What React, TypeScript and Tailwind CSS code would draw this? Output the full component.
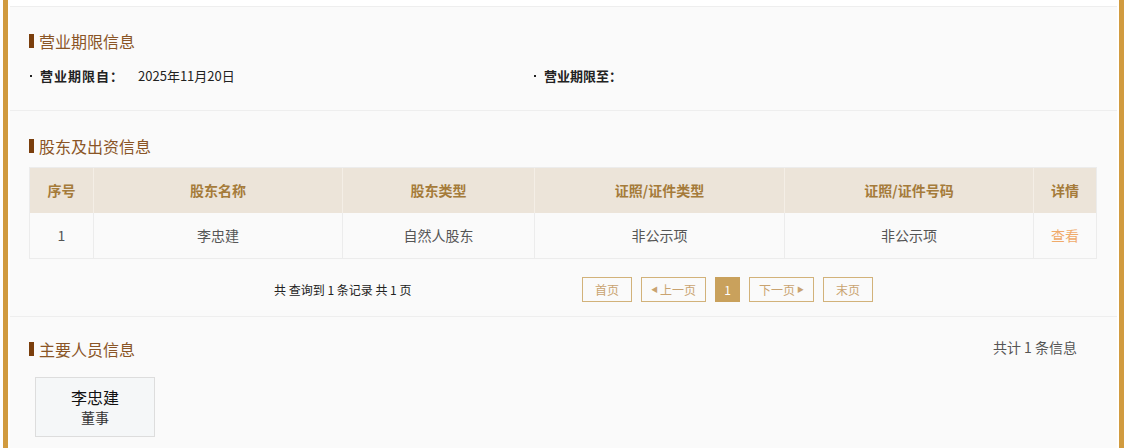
import React from 'react';

const font = { fontFamily: '"Noto Sans CJK SC", "Liberation Sans", sans-serif' };

function Title({ text }: { text: string }) {
  return (
    <div className="flex items-center h-[20px]">
      <span className="w-[5px] h-[14px] bg-[#7a3e0c] mr-[5px]" />
      <span className="text-[16px] leading-[20px] text-[#8a5526]">{text}</span>
    </div>
  );
}

const cols = [
  { name: '序号', w: 'w-[64px]', v: '1' },
  { name: '股东名称', w: 'w-[249px]', v: '李忠建' },
  { name: '股东类型', w: 'w-[192px]', v: '自然人股东' },
  { name: '证照/证件类型', w: 'w-[250px]', v: '非公示项' },
  { name: '证照/证件号码', w: 'w-[249px]', v: '非公示项' },
  { name: '详情', w: 'flex-1', v: '查看' },
];

function PageBtn({ children, w }: { children: React.ReactNode; w: string }) {
  return (
    <div className={`${w} shrink-0 h-[25px] border border-[#d2b27a] text-[#c9a370] text-[12px] flex items-center justify-center`}>
      {children}
    </div>
  );
}

function Dot() {
  return <span className="w-[2px] h-[2px] bg-[#222] mr-[8px] ml-[1px] self-center shrink-0" />;
}

export default function App() {
  return (
    <div className="w-[1130px] h-[448px] overflow-hidden bg-white pl-[3px] pr-[6px]" style={font}>
      <div className="h-full border-l-[5px] border-r-[5px] border-[#d19b3f] px-[2px] bg-white">
        <div className="h-full bg-[#fafafa]">
          <div className="h-[7px] bg-white border-b border-[#eeeeee]" />

          {/* 营业期限 */}
          <div className="h-[104px] border-b border-[#eeeeee] pl-[19px] pt-[24px]">
            <Title text="营业期限信息" />
            <div className="flex mt-[16px] text-[13px] leading-[18px] text-[#222]">
              <div className="w-[504px] flex">
                <Dot />
                <span className="font-bold tracking-[1px]">营业期限自：</span>
                <span className="ml-[14px]">2025年11月20日</span>
              </div>
              <div className="flex">
                <Dot />
                <span className="font-bold">营业期限至：</span>
              </div>
            </div>
          </div>

          {/* 股东及出资 */}
          <div className="h-[206px] border-b border-[#eeeeee] pl-[19px] pr-[20px] pt-[25px]">
            <Title text="股东及出资信息" />
            <div className="mt-[11px] border border-[#ececec] flex flex-col">
              <div className="flex h-[45px] bg-[#ece4d9]">
                {cols.map((c, i) => (
                  <div
                    key={c.name}
                    className={`${c.w} flex items-center justify-center text-[14px] font-bold text-[#a57b3a] ${i < cols.length - 1 ? 'border-r border-[#f4eee6]' : ''}`}
                  >
                    {c.name}
                  </div>
                ))}
              </div>
              <div className="flex h-[45px] bg-[#fafafa]">
                {cols.map((c, i) => (
                  <div
                    key={c.name}
                    className={`${c.w} flex items-center justify-center text-[14px] ${i === cols.length - 1 ? 'text-[#f0aa6a]' : 'text-[#555]'} ${i < cols.length - 1 ? 'border-r border-[#ececec]' : ''}`}
                  >
                    {c.v}
                  </div>
                ))}
              </div>
            </div>
            <div className="flex items-center mt-[18px] h-[25px]">
              <div className="w-[553px] shrink-0 pl-[245px] text-[12px] text-[#222]">共 查询到 1 条记录 共 1 页</div>
              <div className="flex gap-[9px]">
                <PageBtn w="w-[50px]">首页</PageBtn>
                <PageBtn w="w-[65px]">
                  <span className="text-[7px] mr-[2px]">◀</span>上一页
                </PageBtn>
                <div className="w-[25px] shrink-0 h-[25px] bg-[#c9a15c] text-white text-[12px] flex items-center justify-center">1</div>
                <PageBtn w="w-[65px]">
                  下一页<span className="text-[7px] ml-[2px]">▶</span>
                </PageBtn>
                <PageBtn w="w-[50px]">末页</PageBtn>
              </div>
            </div>
          </div>

          {/* 主要人员 */}
          <div className="pl-[19px] pr-[40px] pt-[22px]">
            <div className="flex justify-between items-center">
              <Title text="主要人员信息" />
              <span className="text-[14px] text-[#555] -mt-[4px]">共计 1 条信息</span>
            </div>
            <div className="mt-[18px] ml-[6px] w-[120px] h-[60px] border border-[#dddddd] bg-[#f5f7f8] flex flex-col items-center justify-center">
              <span className="text-[16px] leading-[20px] text-[#111]">李忠建</span>
              <span className="text-[14px] leading-[20px] text-[#333]">董事</span>
            </div>
          </div>
        </div>
      </div>
    </div>
  );
}
